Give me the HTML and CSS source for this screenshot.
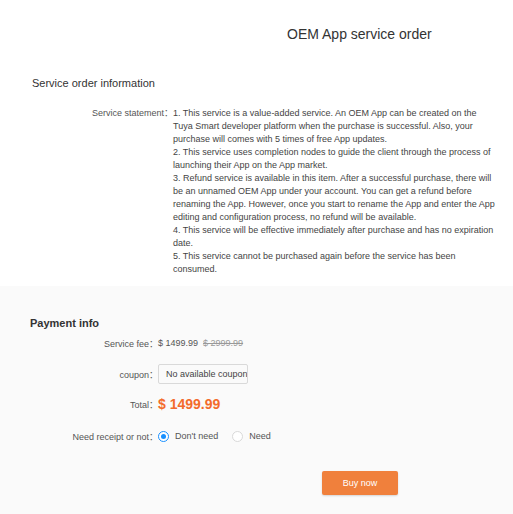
FILE: index.html
```html
<!DOCTYPE html>
<html>
<head>
<meta charset="utf-8">
<link rel="stylesheet" href="styles.css">
</head>
<body>
<div class="top">
  <h1 class="title">OEM App service order</h1>
  <h2 class="section-title">Service order information</h2>
  <div class="statement">
    <div class="st-label">Service statement：</div>
    <div class="st-body">
      <p>1. This service is a value-added service. An OEM App can be created on the<br>Tuya Smart developer platform when the purchase is successful. Also, your<br>purchase will comes with 5 times of free App updates.</p>
      <p>2. This service uses completion nodes to guide the client through the process of<br>launching their App on the App market.</p>
      <p>3. Refund service is available in this item. After a successful purchase, there will<br>be an unnamed OEM App under your account. You can get a refund before<br>renaming the App. However, once you start to rename the App and enter the App<br>editing and configuration process, no refund will be available.</p>
      <p>4. This service will be effective immediately after purchase and has no expiration<br>date.</p>
      <p>5. This service cannot be purchased again before the service has been<br>consumed.</p>
    </div>
  </div>
</div>
<div class="pay">
  <h2 class="pay-title">Payment info</h2>
  <div class="row row-fee">
    <span class="label">Service fee：</span>
    <span class="price">$ 1499.99</span>
    <span class="old-price">$ 2999.99</span>
  </div>
  <div class="row row-coupon">
    <span class="label">coupon：</span>
    <div class="coupon">No available coupons</div>
  </div>
  <div class="row row-total">
    <span class="label">Total：</span>
    <span class="total">$ 1499.99</span>
  </div>
  <div class="row row-receipt">
    <span class="label">Need receipt or not：</span>
    <label class="radio"><span class="dot checked"></span>Don't need</label>
    <label class="radio"><span class="dot"></span>Need</label>
  </div>
  <div class="actions">
    <button class="buy">Buy now</button>
  </div>
</div>
</body>
</html>
```
FILE: styles.css
```css
html, body {
  margin: 0;
  padding: 0;
  background: #fafafa;
  font-family: "Liberation Sans", Arial, "Noto Sans CJK SC", sans-serif;
  color: #333;
}
.top {
  background: #fff;
  padding: 26px 0 10px 0;
}
.title {
  margin: 0 0 0 287px;
  font-size: 14px;
  line-height: 16px;
  font-weight: normal;
  color: #333;
}
.section-title {
  margin: 34px 0 0 32px;
  font-size: 11px;
  line-height: 14px;
  font-weight: normal;
  color: #333;
}
.statement {
  display: flex;
  margin-top: 17px;
  font-size: 9px;
  line-height: 13px;
}
.st-label {
  width: 173px;
  flex: none;
  text-align: right;
  color: #555;
  white-space: nowrap;
}
.st-body {
  white-space: nowrap;
  color: #444;
}
.st-body p {
  margin: 0;
}
.pay {
  padding: 30px 0 30px 0;
}
.pay-title {
  margin: 0 0 0 30px;
  font-size: 11px;
  line-height: 14px;
  font-weight: bold;
  color: #333;
}
.row {
  display: flex;
  align-items: center;
  font-size: 9px;
  color: #555;
}
.label {
  width: 158px;
  flex: none;
  text-align: right;
  white-space: nowrap;
}
.row-fee {
  margin-top: 6px;
  height: 14px;
}
.price {
  color: #555;
}
.old-price {
  margin-left: 5px;
  color: #999;
  text-decoration: line-through;
}
.row-coupon {
  margin-top: 14px;
  height: 20px;
}
.coupon {
  box-sizing: border-box;
  width: 90px;
  height: 20px;
  line-height: 18px;
  border: 1px solid #d9d9d9;
  border-radius: 2px;
  background: #fafafa;
  padding-left: 7px;
  overflow: hidden;
  white-space: nowrap;
  color: #444;
}
.row-total {
  margin-top: 11px;
  height: 18px;
}
.total {
  font-size: 14px;
  font-weight: bold;
  color: #f36b2c;
}
.row-receipt {
  margin-top: 16px;
  height: 14px;
}
.radio {
  display: flex;
  align-items: center;
  margin-right: 14px;
  color: #555;
}
.dot {
  box-sizing: border-box;
  width: 11px;
  height: 11px;
  border-radius: 50%;
  border: 1px solid #d9d9d9;
  background: #fff;
  margin-right: 6px;
  position: relative;
}
.dot.checked {
  border-color: #1890ff;
}
.dot.checked::after {
  content: "";
  position: absolute;
  left: 2px;
  top: 2px;
  width: 5px;
  height: 5px;
  border-radius: 50%;
  background: #1890ff;
}
.actions {
  margin-top: 28px;
  padding-left: 322px;
}
.buy {
  width: 76px;
  height: 24px;
  border: none;
  border-radius: 2px;
  background: #f0803c;
  color: #fff;
  font-family: "Liberation Sans", Arial, sans-serif;
  font-size: 9px;
  box-shadow: 0 1px 2px rgba(0,0,0,0.15);
  padding: 0;
}
```
